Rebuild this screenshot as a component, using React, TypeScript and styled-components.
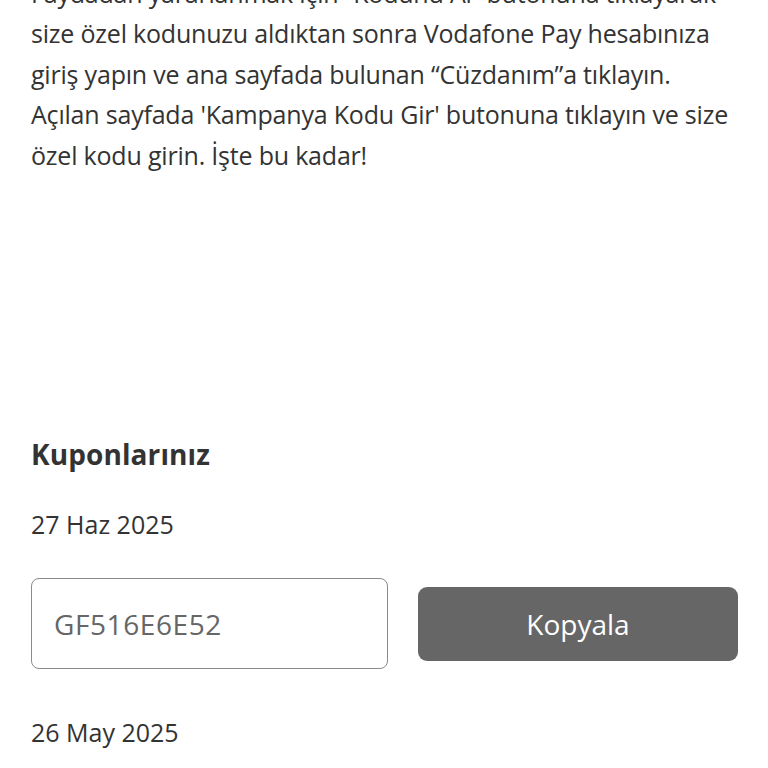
import React from "react";
import styled, { createGlobalStyle } from "styled-components";

const GlobalStyle = createGlobalStyle`
  html, body {
    margin: 0;
    padding: 0;
    background: #ffffff;
    overflow: hidden;
  }
  body {
    font-family: "Open Sans", "Noto Sans", sans-serif;
    color: #333333;
  }
`;

const Page = styled.main`
  width: 768px;
  height: 768px;
  box-sizing: border-box;
  padding: 0 30px 0 31px;
  display: flex;
  flex-direction: column;
  overflow: hidden;
`;

/* Instructions paragraph, scrolled so its first line sits under the top edge */
const Description = styled.p`
  margin: -27px 0 0;
  font-size: 25px;
  letter-spacing: -0.2px;
  line-height: 40.4px;
  color: #333333;
  white-space: nowrap;
`;

const SectionTitle = styled.h2`
  margin: 261px 0 0;
  font-size: 28px;
  font-weight: 700;
  letter-spacing: 0.1px;
  line-height: 36px;
  color: #333333;
`;

const CouponDate = styled.div<{ $gap: number }>`
  margin-top: ${(p) => p.$gap}px;
  font-size: 25px;
  line-height: 34px;
  color: #333333;
`;

const CouponRow = styled.div`
  margin-top: 37px;
  display: grid;
  grid-template-columns: 357px 1fr;
  column-gap: 30px;
  align-items: center;
`;

const CodeField = styled.div`
  height: 91px;
  box-sizing: border-box;
  border: 1px solid #8a8a8a;
  border-radius: 8px;
  display: flex;
  align-items: center;
  padding-left: 22px;
  font-size: 28px;
  letter-spacing: 0.6px;
  color: #666666;
`;

const CopyButton = styled.button`
  height: 74px;
  border: none;
  border-radius: 9px;
  background: #666666;
  color: #ffffff;
  font-family: inherit;
  font-size: 28px;
  cursor: pointer;
`;

export default function App() {
  return (
    <>
      <GlobalStyle />
      <Page>
        <Description>
          Faydadan yararlanmak için “Kodunu Al” butonuna tıklayarak
          <br />
          size özel kodunuzu aldıktan sonra Vodafone Pay hesabınıza
          <br />
          giriş yapın ve ana sayfada bulunan “Cüzdanım”a tıklayın.
          <br />
          Açılan sayfada 'Kampanya Kodu Gir' butonuna tıklayın ve size
          <br />
          özel kodu girin. İşte bu kadar!
        </Description>
        <SectionTitle>Kuponlarınız</SectionTitle>
        <CouponDate $gap={35}>27 Haz 2025</CouponDate>
        <CouponRow>
          <CodeField>GF516E6E52</CodeField>
          <CopyButton>Kopyala</CopyButton>
        </CouponRow>
        <CouponDate $gap={46}>26 May 2025</CouponDate>
      </Page>
    </>
  );
}
